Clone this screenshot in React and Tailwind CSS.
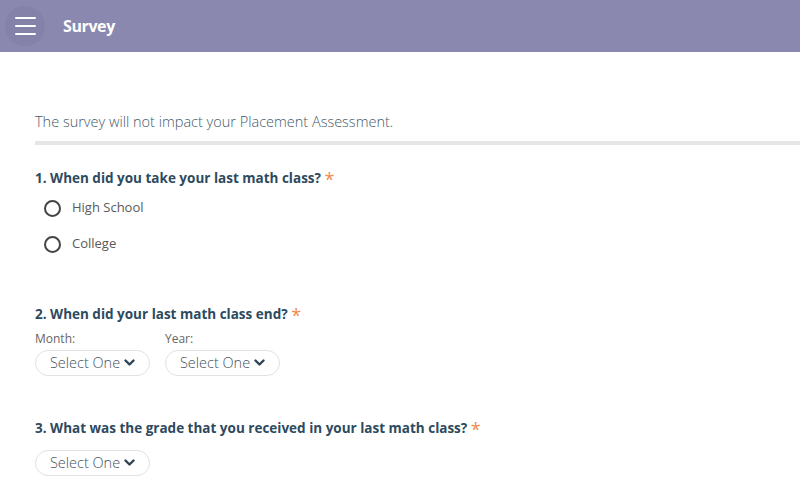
const Chevron = () => (
  <svg width="11" height="8" viewBox="0 0 11 8" className="ml-1">
    <path d="M1.5 1.5 L5.5 5.5 L9.5 1.5" fill="none" stroke="#2f4454" strokeWidth="2.4" strokeLinecap="round" strokeLinejoin="round" />
  </svg>
)

const Select = () => (
  <div className="flex items-center justify-center w-[115px] h-[26px] rounded-full border border-[#e2e2e2] text-[14.5px] font-light text-[#3f5260]">
    Select One
    <Chevron />
  </div>
)

const Question = ({ n, children }) => (
  <p className="text-[13.5px] leading-[18px] text-[#2d4a5e] font-bold">
    {n}. {children} <span className="inline-block align-top text-[18px] leading-[20px] text-[#f28a4c] font-normal">*</span>
  </p>
)

const Radio = ({ label }) => (
  <div className="flex items-center gap-[11px] h-[20px]">
    <span className="w-[17px] h-[17px] rounded-full border-2 border-[#444]" />
    <span className="text-[13px] text-[#5a5a5a]">{label}</span>
  </div>
)

const App = () => {
  return (
    <div className="w-[800px] h-[489px] bg-white overflow-hidden font-['Open_Sans',sans-serif]">
      <div className="h-[52px] bg-[#8a88ae] flex items-center pl-[5px]">
        <div className="w-[40px] h-[40px] rounded-full bg-[#8482a9] flex flex-col items-center justify-center gap-[6px]">
          <span className="w-[21px] h-[2px] bg-white rounded" />
          <span className="w-[21px] h-[2px] bg-white rounded" />
          <span className="w-[21px] h-[2px] bg-white rounded" />
        </div>
        <h1 className="ml-[18px] text-white font-bold text-[16px] tracking-tight">Survey</h1>
      </div>

      <div className="pl-[35px] pt-[61px]">
        <p className="text-[14.5px] leading-[18px] text-[#44596a] font-light">The survey will not impact your Placement Assessment.</p>
        <div className="mt-[10px] h-[4px] bg-[#e6e6e6]" />

        <div className="mt-[24px] h-[18px]">
          <Question n="1">When did you take your last math class?</Question>
        </div>
        <div className="mt-[11px] ml-[9px] flex flex-col gap-[16px]">
          <Radio label="High School" />
          <Radio label="College" />
        </div>

        <div className="mt-[51px] h-[18px]">
          <Question n="2">When did your last math class end?</Question>
        </div>
        <div className="mt-[9px] flex gap-[15px]">
          <div>
            <p className="text-[12px] leading-[14px] text-[#666]">Month:</p>
            <div className="mt-[4px]"><Select /></div>
          </div>
          <div>
            <p className="text-[12px] leading-[14px] text-[#666]">Year:</p>
            <div className="mt-[4px]"><Select /></div>
          </div>
        </div>

        <div className="mt-[43px] h-[18px]">
          <Question n="3">What was the grade that you received in your last math class?</Question>
        </div>
        <div className="mt-[13px]"><Select /></div>
      </div>
    </div>
  )
}

export default App
